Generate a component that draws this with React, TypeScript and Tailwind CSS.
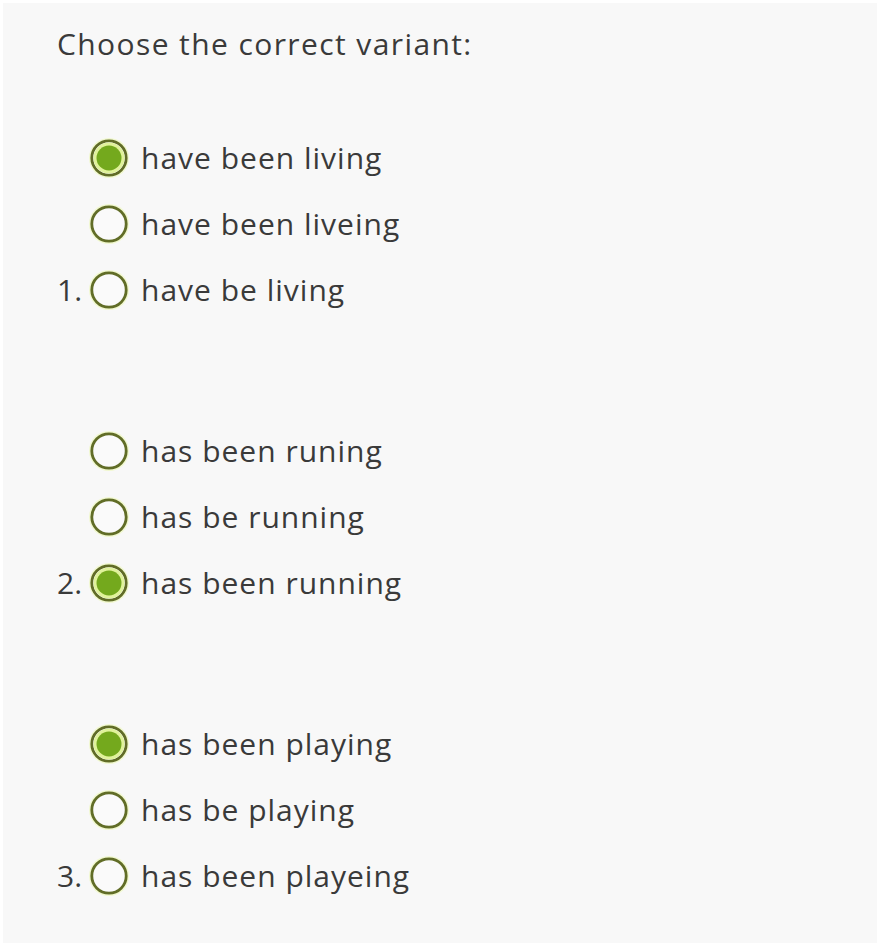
import React from 'react';

type Option = { text: string; checked?: boolean };

const groups: Option[][] = [
  [
    { text: 'have been living', checked: true },
    { text: 'have been liveing' },
    { text: 'have be living' },
  ],
  [
    { text: 'has been runing' },
    { text: 'has be running' },
    { text: 'has been running', checked: true },
  ],
  [
    { text: 'has been playing', checked: true },
    { text: 'has be playing' },
    { text: 'has been playeing' },
  ],
];

const Radio: React.FC<{ checked?: boolean }> = ({ checked }) => (
  <svg width="40" height="40" viewBox="0 0 40 40" className="shrink-0">
    <circle cx="20" cy="20" r="20" fill="#f1f8cf" />
    <circle cx="20" cy="20" r="17.2" fill="#fafafa" stroke="#616d27" strokeWidth="2.8" />
    {checked && (
      <>
        <circle cx="20" cy="20" r="15.5" fill="#e0f29a" />
        <circle cx="20" cy="20" r="12.5" fill="#74a91d" />
      </>
    )}
  </svg>
);

const App: React.FC = () => {
  return (
    <div className="w-[894px] h-[946px] bg-white p-[3px] pr-[17px]">
      <div
        className="h-full bg-[#f8f8f8] pl-[52px] pt-[21px] text-[#3a3a3a]"
        style={{ fontFamily: '"Open Sans", "Noto Sans", sans-serif' }}
      >
        <h1 className="ml-[2px] text-[30px] leading-[40px] font-normal tracking-[1.4px]">Choose the correct variant:</h1>

        <div className="mt-[61px] flex flex-col gap-[95px]">
          {groups.map((group, gi) => (
            <div key={gi} className="flex flex-col">
              {group.map((opt, oi) => (
                <div key={oi} className="flex items-center h-[66px]">
                  <span className="w-[34px] pl-[2px] text-[30px] leading-none">
                    {oi === group.length - 1 ? `${gi + 1}.` : ''}
                  </span>
                  <Radio checked={opt.checked} />
                  <span className="ml-[12px] text-[30px] leading-none tracking-[1px]">{opt.text}</span>
                </div>
              ))}
            </div>
          ))}
        </div>
      </div>
    </div>
  );
};

export default App;
